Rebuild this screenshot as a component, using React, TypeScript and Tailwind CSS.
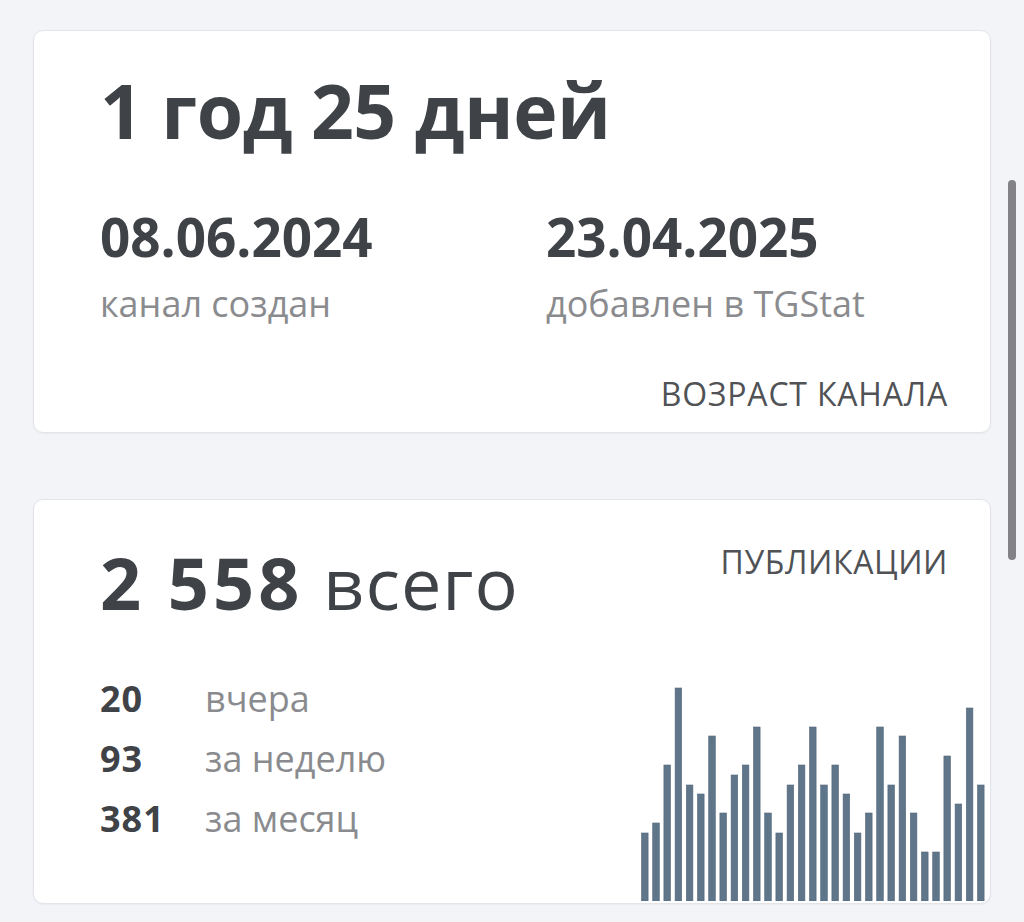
import React from "react";

const bars = [68, 78, 136, 213, 116, 107, 165, 88, 126, 136, 174, 88, 68, 116, 136, 174, 116, 136, 107, 68, 88, 174, 116, 165, 88, 49, 49, 145, 97, 193, 116];

function Chart() {
  const pitch = 11.2;
  const w = 6.6;
  const h = 215;
  return (
    <svg width={348} height={h} viewBox={`0 0 348 ${h}`} className="block">
      {bars.map((b, i) => (
        <rect key={i} x={i * pitch + 0.5} y={h - b} width={w} height={b} fill="#5f7589" stroke="#56697c" strokeWidth={0.6} />
      ))}
    </svg>
  );
}

export default function App() {
  return (
    <div
      className="relative min-h-[922px] w-[1024px] overflow-hidden bg-[#f3f4f8] px-[33px] pt-[30px]"
      style={{ fontFamily: '"Open Sans", "Noto Sans", sans-serif' }}
    >
      <div className="flex flex-col gap-[66px]">
        {/* Card 1 */}
        <div className="h-[403px] rounded-[10px] border border-[#e2e4e9] bg-white pl-[66px] pr-[42px] pt-[42px] shadow-[0_1px_2px_rgba(0,0,0,0.04)]">
          <div className="text-[75px] font-bold leading-none tracking-[-0.5px] text-[#3f4247]">1 год 25 дней</div>
          <div className="mt-[62px] flex">
            <div className="w-[446px]">
              <div className="text-[53px] font-bold leading-none text-[#3f4247]">08.06.2024</div>
              <div className="mt-[23px] text-[36px] leading-none text-[#8a8b8e]">канал создан</div>
            </div>
            <div>
              <div className="text-[53px] font-bold leading-none text-[#3f4247]">23.04.2025</div>
              <div className="mt-[23px] text-[36px] leading-none text-[#8a8b8e]">добавлен в TGStat</div>
            </div>
          </div>
          <div className="mt-[56px] text-right text-[32px] leading-none tracking-[0.8px] text-[#505256]">ВОЗРАСТ КАНАЛА</div>
        </div>

        {/* Card 2 */}
        <div className="flex h-[405px] flex-col overflow-hidden rounded-[10px] border border-[#e2e4e9] bg-white pl-[66px] pr-[1px] shadow-[0_1px_2px_rgba(0,0,0,0.04)]">
          <div className="flex items-start justify-between pr-[41px] pt-[46px]">
            <div className="leading-none text-[#3f4247]">
              <span className="text-[72px] font-bold tracking-[4px]">2 558</span>
              <span className="text-[72px] font-normal tracking-[1px]"> всего</span>
            </div>
            <div className="text-[32px] leading-none tracking-[0.6px] text-[#505256]">ПУБЛИКАЦИИ</div>
          </div>
          <div className="flex flex-1 items-end justify-between">
            <div className="mb-[66px] flex flex-col gap-[24px] text-[36px] leading-[36px]">
              <div className="flex">
                <span className="w-[105px] font-bold tracking-[1px] text-[#3f4247]">20</span>
                <span className="text-[#8a8b8e]">вчера</span>
              </div>
              <div className="flex">
                <span className="w-[105px] font-bold tracking-[1px] text-[#3f4247]">93</span>
                <span className="text-[#8a8b8e]">за неделю</span>
              </div>
              <div className="flex">
                <span className="w-[105px] font-bold tracking-[1px] text-[#3f4247]">381</span>
                <span className="text-[#8a8b8e]">за месяц</span>
              </div>
            </div>
            <div className="mb-[2px]">
              <Chart />
            </div>
          </div>
        </div>
      </div>

      {/* scrollbar overlay */}
      <div className="absolute left-[1008px] top-[180px] h-[380px] w-[8px] rounded-full bg-[#838387]" />
    </div>
  );
}
